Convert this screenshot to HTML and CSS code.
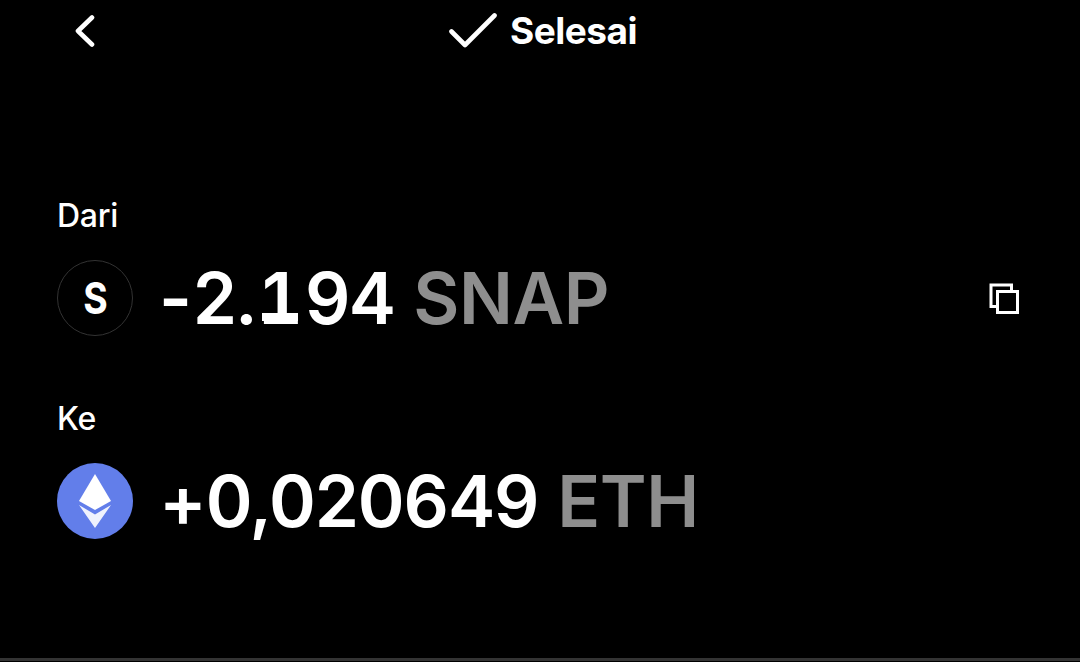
FILE: index.html
```html
<!DOCTYPE html>
<html lang="en">
<head>
    <meta charset="UTF-8">
    <meta name="viewport" content="width=device-width, initial-scale=1.0">
    <title>Selesai</title>
    <link rel="stylesheet" href="styles.css">
</head>
<body>
    <header class="topbar">
        <svg class="back-icon" width="20" height="32" viewBox="0 0 20 32">
            <path d="M17 2.500 L3 16 L17 29.500" fill="none" stroke="#fff" stroke-width="4.600" stroke-linecap="round" stroke-linejoin="round"/>
        </svg>
        <div class="status">
            <svg class="check-icon" width="48" height="36" viewBox="0 0 48 36">
                <path d="M2.500 18.500 L16 32 L45.500 2.500" fill="none" stroke="#fff" stroke-width="4.600" stroke-linecap="round" stroke-linejoin="round"/>
            </svg>
            <span class="status-text">Selesai</span>
        </div>
    </header>
    <main class="content">
        <div class="label label-from">Dari</div>
        <div class="row">
            <div class="coin coin-snap"><span class="coin-letter">S</span></div>
            <div class="amount">-<span class="tabular">2.<span class="footed-one">1</span>94</span> <span class="symbol">SNAP</span></div>
            <svg class="copy-icon" width="30" height="31" viewBox="0 0 30 31">
                <path d="M7 23.500 H2 V2 H22.500 V7" fill="none" stroke="#fff" stroke-width="3"/>
                <rect x="8.500" y="8.500" width="20" height="21" fill="none" stroke="#fff" stroke-width="3"/>
            </svg>
        </div>
        <div class="label label-to">Ke</div>
        <div class="row">
            <div class="coin coin-eth">
                <svg width="34" height="54" viewBox="0 0 34 54">
                    <path d="M17 0 L33 27 L17 36 L1 27 Z" fill="#fff"/>
                    <path d="M1 31 L17 40.500 L33 31 L17 54 Z" fill="#fff" fill-opacity="0.900"/>
                </svg>
            </div>
            <div class="amount">+0,020649 <span class="symbol">ETH</span></div>
        </div>
    </main>
    <div class="bottom-line"></div>
</body>
</html>
```

FILE: styles.css
```css
html,
body {
    height: 100%;
}
body {
    margin: 0;
    background-color: #000;
    color: #fff;
    font-family: Inter, "Liberation Sans", sans-serif;
    display: flex;
    flex-direction: column;
    overflow: hidden;
}
.topbar {
    height: 62px;
    padding-left: 75px;
    display: flex;
    align-items: center;
}
.status {
    margin-left: 354px;
    display: flex;
    align-items: center;
    gap: 13px;
}
.status-text {
    font-size: 37px;
    font-weight: 700;
    letter-spacing: -0.5px;
    position: relative;
    top: -1px;
}
.content {
    flex: 1;
    padding: 136px 61px 0 57px;
}
.label {
    font-size: 32px;
    font-weight: 500;
    line-height: 36px;
    letter-spacing: -0.3px;
}
.label-to {
    margin-top: 65px;
}
.row {
    display: flex;
    align-items: center;
    gap: 26px;
    margin-top: 26px;
    height: 76px;
}
.coin {
    width: 76px;
    height: 76px;
    border-radius: 50%;
    box-sizing: border-box;
    display: flex;
    align-items: center;
    justify-content: center;
    flex-shrink: 0;
}
.coin-snap {
    border: 1px solid #333;
}
.coin-letter {
    font-size: 44px;
    font-weight: 700;
    transform: scaleX(0.85);
}
.coin-eth {
    background-color: #627eea;
}
.amount {
    font-size: 71px;
    font-weight: 600;
    line-height: 76px;
    letter-spacing: -1.1px;
    word-spacing: 2px;
    white-space: nowrap;
}
.tabular {
    font-feature-settings: "tnum";
    margin-left: 1px;
}
.footed-one {
    display: inline-block;
    position: relative;
    width: 50px;
    text-align: center;
}
.footed-one::after {
    content: "";
    position: absolute;
    left: 7px;
    right: 7px;
    bottom: 15px;
    height: 8px;
    background-color: #fff;
}
.symbol {
    color: #8e8e8e;
    letter-spacing: -0.4px;
}
.copy-icon {
    margin-left: auto;
}
.bottom-line {
    height: 3px;
    margin-bottom: 1px;
    background-color: #333;
}
```
